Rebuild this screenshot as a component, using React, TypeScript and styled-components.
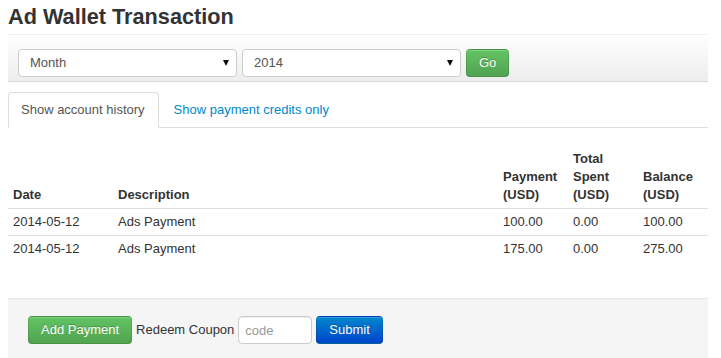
import { FC } from "react";
import styled, { createGlobalStyle, css } from "styled-components";

const GlobalStyle = createGlobalStyle`
  body {
    margin: 0;
    font-family: "Liberation Sans", Arial, sans-serif;
    font-size: 13px;
    line-height: 18px;
    color: #333;
    background: #fff;
  }
`;

const Page = styled.div`
  width: 700px;
  margin: 0 8px;
  padding-top: 5px;
`;

const Title = styled.h1`
  margin: 0;
  padding-bottom: 5px;
  font-size: 21.7px;
  line-height: 24px;
  font-weight: bold;
  color: #333;
  border-bottom: 1px solid #eee;
`;

const FilterBar = styled.form`
  display: flex;
  align-items: center;
  gap: 5px;
  padding: 14px 10px 4px;
  background: linear-gradient(to bottom, #ffffff, #ededed);
  border-bottom: 1px solid #d8d8d8;
`;

const SelectBox = styled.div`
  box-sizing: border-box;
  width: 219px;
  height: 28px;
  display: flex;
  align-items: center;
  justify-content: space-between;
  padding: 0 7px 0 11px;
  background: #fff;
  border: 1px solid #ccc;
  border-radius: 4px;
  color: #555;
`;

const Caret = styled.span`
  width: 0;
  height: 0;
  border-left: 3.5px solid transparent;
  border-right: 3.5px solid transparent;
  border-top: 6px solid #111;
`;

const Button = styled.button<{ $variant: "success" | "primary" }>`
  padding: 4px 12px;
  font-family: inherit;
  font-size: 13px;
  line-height: 18px;
  color: #fff;
  text-shadow: 0 -1px 0 rgba(0, 0, 0, 0.25);
  border: 1px solid;
  border-color: rgba(0, 0, 0, 0.1) rgba(0, 0, 0, 0.1) rgba(0, 0, 0, 0.25);
  border-radius: 4px;
  box-shadow: inset 0 1px 0 rgba(255, 255, 255, 0.2);
  cursor: pointer;

  ${(p) =>
    p.$variant === "success"
      ? css`
          background: linear-gradient(to bottom, #62c462, #51a351);
        `
      : css`
          background: linear-gradient(to bottom, #0088cc, #0044cc);
        `}
`;

const TabList = styled.ul`
  display: flex;
  margin: 10px 0 0;
  padding: 0;
  list-style: none;
  border-bottom: 1px solid #ddd;
`;

const TabItem = styled.li`
  margin-right: 2px;
  margin-bottom: -1px;
`;

const TabLink = styled.a<{ $active?: boolean }>`
  display: block;
  padding: 8px 13px 8px 12px;
  line-height: 18px;
  border: 1px solid transparent;
  border-radius: 4px 4px 0 0;
  text-decoration: none;
  color: #0088cc;

  ${(p) =>
    p.$active &&
    css`
      color: #555;
      background: #fff;
      border-color: #ddd #ddd transparent;
    `}
`;

const Table = styled.table`
  width: 100%;
  table-layout: fixed;
  border-collapse: collapse;
  margin: 18px 0 0;
`;

const Th = styled.th<{ $width?: string }>`
  box-sizing: border-box;
  width: ${(p) => p.$width || "auto"};
  padding: 4px 5px;
  text-align: left;
  vertical-align: bottom;
  font-weight: bold;
  line-height: 18px;
  border-bottom: 1px solid #ddd;
`;

const Row = styled.tr`
  & + & td {
    border-top: 1px solid #ddd;
  }
`;

const Td = styled.td`
  padding: 4px 5px;
  line-height: 18px;
  vertical-align: top;
`;

const FormActions = styled.div`
  display: flex;
  align-items: center;
  gap: 4px;
  margin-top: 36px;
  padding: 17px 20px 18px;
  background: #f5f5f5;
  border-top: 1px solid #e5e5e5;
`;

const CouponInput = styled.input`
  box-sizing: border-box;
  width: 74px;
  height: 28px;
  padding: 4px 6px;
  font-family: inherit;
  font-size: 13px;
  color: #555;
  background: #fff;
  border: 1px solid #ccc;
  border-radius: 4px;
  box-shadow: inset 0 1px 1px rgba(0, 0, 0, 0.075);

  &::placeholder {
    color: #999;
  }
`;

const transactions = [
  { date: "2014-05-12", description: "Ads Payment", payment: "100.00", spent: "0.00", balance: "100.00" },
  { date: "2014-05-12", description: "Ads Payment", payment: "175.00", spent: "0.00", balance: "275.00" },
];

const App: FC = () => {
  return (
    <>
      <GlobalStyle />
      <Page>
        <Title>Ad Wallet Transaction</Title>

        <FilterBar onSubmit={(e) => e.preventDefault()}>
          <SelectBox>
            Month
            <Caret />
          </SelectBox>
          <SelectBox>
            2014
            <Caret />
          </SelectBox>
          <Button type="submit" $variant="success">Go</Button>
        </FilterBar>

        <TabList>
          <TabItem>
            <TabLink href="#" $active>Show account history</TabLink>
          </TabItem>
          <TabItem>
            <TabLink href="#">Show payment credits only</TabLink>
          </TabItem>
        </TabList>

        <Table>
          <thead>
            <tr>
              <Th $width="105px">Date</Th>
              <Th>Description</Th>
              <Th $width="70px">Payment (USD)</Th>
              <Th $width="70px">Total Spent (USD)</Th>
              <Th $width="70px">Balance (USD)</Th>
            </tr>
          </thead>
          <tbody>
            {transactions.map((t, index) => (
              <Row key={index}>
                <Td>{t.date}</Td>
                <Td>{t.description}</Td>
                <Td>{t.payment}</Td>
                <Td>{t.spent}</Td>
                <Td>{t.balance}</Td>
              </Row>
            ))}
          </tbody>
        </Table>

        <FormActions>
          <Button type="button" $variant="success">Add Payment</Button>
          <span>Redeem Coupon</span>
          <CouponInput placeholder="code" />
          <Button type="button" $variant="primary">Submit</Button>
        </FormActions>
      </Page>
    </>
  );
};

export default App;
